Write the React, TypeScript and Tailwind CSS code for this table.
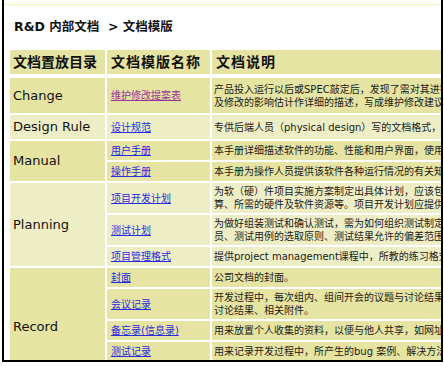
import React from "react";

const DARK = "bg-[#e6e4a2]";
const LIGHT = "bg-[#eeeec6]";

type Row = { link: string; visited?: boolean; lines: string[]; h: string };
type Group = { name: string; light: boolean; rows: Row[]; span: string };

const groups: Group[] = [
  {
    name: "Change",
    light: false,
    span: "row-span-1",
    rows: [
      {
        link: "维护修改提案表",
        visited: true,
        h: "h-[35px]",
        lines: [
          "产品投入运行以后或SPEC敲定后，发现了需对其进行修改的",
          "及修改的影响估计作详细的描述，写成维护修改建议，提交",
        ],
      },
    ],
  },
  {
    name: "Design Rule",
    light: true,
    span: "row-span-1",
    rows: [
      {
        link: "设计规范",
        h: "h-[24px]",
        lines: ["专供后端人员（physical design）写的文档格式，内容包括"],
      },
    ],
  },
  {
    name: "Manual",
    light: false,
    span: "row-span-2",
    rows: [
      { link: "用户手册", h: "h-[19px]", lines: ["本手册详细描述软件的功能、性能和用户界面，使用户了解"] },
      { link: "操作手册", h: "h-[19px]", lines: ["本手册为操作人员提供该软件各种运行情况的有关知识"] },
    ],
  },
  {
    name: "Planning",
    light: true,
    span: "row-span-3",
    rows: [
      {
        link: "项目开发计划",
        h: "h-[30px]",
        lines: [
          "为软（硬）件项目实施方案制定出具体计划，应该包括",
          "算、所需的硬件及软件资源等。项目开发计划应提供给",
        ],
      },
      {
        link: "测试计划",
        h: "h-[30px]",
        lines: [
          "为做好组装测试和确认测试，需为如何组织测试制定实施",
          "员、测试用例的选取原则、测试结果允许的偏差范围等",
        ],
      },
      { link: "项目管理格式", h: "h-[19px]", lines: ["提供project management课程中，所教的练习格式"] },
    ],
  },
  {
    name: "Record",
    light: false,
    span: "row-span-5",
    rows: [
      { link: "封面", h: "h-[19px]", lines: ["公司文档的封面。"] },
      {
        link: "会议记录",
        h: "h-[30px]",
        lines: ["开发过程中，每次组内、组间开会的议题与讨论结果均", "讨论结果、相关附件。"],
      },
      { link: "备忘录(信息录)", h: "h-[19px]", lines: ["用来放置个人收集的资料，以便与他人共享，如网址消息"] },
      { link: "测试记录", h: "h-[19px]", lines: ["用来记录开发过程中，所产生的bug 案例、解决方法与"] },
      { link: "", h: "h-[23px]", lines: [] },
    ],
  },
];

const font = { fontFamily: '"DejaVu Sans", "Noto Sans CJK SC", sans-serif' };

export default function App() {
  return (
    <div className="w-[444px] h-[366px] bg-white overflow-hidden" style={font}>
      <div className="ml-[2px] w-[441px] h-[362px] border-l-2 border-r-2 border-b-2 border-black overflow-hidden">
        <div className="pt-[4px]">
          <div className="h-0 border-t border-dotted border-[#e6e4a2]" />
        </div>
        <div className="h-[45px] pl-[10px] flex items-center text-[12.5px] font-bold text-[#111]">
          R&amp;D 内部文档 &nbsp;&gt; 文档模版
        </div>
        <div className="pl-[6px] w-[600px]">
          <div className="grid grid-cols-[95px_103px_300px] gap-x-[2px] h-[24px] mb-[4px]">
            <div className={`${DARK} flex items-center pl-[3px] text-[14px] font-bold text-[#111]`}>文档置放目录</div>
            <div className={`${DARK} flex items-center pl-[4px] text-[14px] font-bold text-[#111] tracking-[1px]`}>文档模版名称</div>
            <div className={`${DARK} flex items-center pl-[4px] text-[14px] font-bold text-[#111] tracking-[1px]`}>文档说明</div>
          </div>
          <div className="grid grid-cols-[95px_103px_300px] gap-[2px]">
            {groups.map((g) => (
              <React.Fragment key={g.name}>
                <div
                  className={`${g.light ? LIGHT : DARK} ${g.span} flex items-center pl-[3px] text-[13px] text-[#111]`}
                >
                  {g.name}
                </div>
                {g.rows.map((r, i) => (
                  <div
                    key={g.name + i}
                    className={`col-start-2 col-span-2 grid grid-cols-[103px_300px] gap-x-[2px] ${r.h}`}
                  >
                    <div className={`${g.light ? LIGHT : DARK} flex items-center pl-[4px] text-[10px]`}>
                      {r.link && (
                        <a
                          href="#"
                          className={`underline ${r.visited ? "text-[#993399]" : "text-[#2a2ae0]"}`}
                        >
                          {r.link}
                        </a>
                      )}
                    </div>
                    <div
                      className={`${g.light ? LIGHT : DARK} flex flex-col justify-center pl-[2px] text-[10px] leading-[13px] text-[#1a1a1a] whitespace-nowrap overflow-hidden`}
                    >
                      {r.lines.map((l) => (
                        <div key={l}>{l}</div>
                      ))}
                    </div>
                  </div>
                ))}
              </React.Fragment>
            ))}
          </div>
        </div>
      </div>
    </div>
  );
}
